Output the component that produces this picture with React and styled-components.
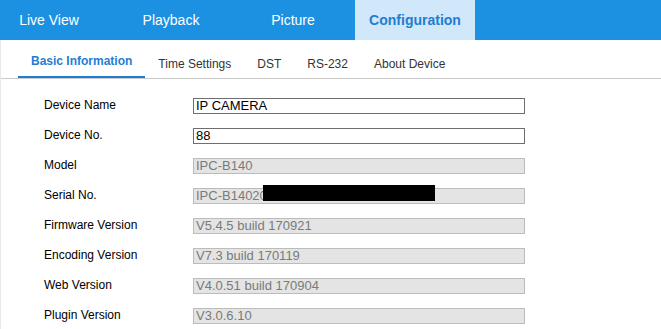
import React from "react";
import styled, { createGlobalStyle } from "styled-components";

const GlobalStyle = createGlobalStyle`
  html, body {
    margin: 0;
    padding: 0;
    background: #fff;
    font-family: "Liberation Sans", Arial, sans-serif;
  }
`;

const mainTabs = ["Live View", "Playback", "Picture", "Configuration"];
const subTabs = ["Basic Information", "Time Settings", "DST", "RS-232", "About Device"];

const fields = [
  { label: "Device Name", value: "IP CAMERA", editable: true },
  { label: "Device No.", value: "88", editable: true },
  { label: "Model", value: "IPC-B140" },
  { label: "Serial No.", value: "IPC-B140200", redacted: true },
  { label: "Firmware Version", value: "V5.4.5 build 170921" },
  { label: "Encoding Version", value: "V7.3 build 170119" },
  { label: "Web Version", value: "V4.0.51 build 170904" },
  { label: "Plugin Version", value: "V3.0.6.10" },
];

export default function App() {
  return (
    <Page>
      <GlobalStyle />
      <TopBar>
        <TabList>
          {mainTabs.map((t) => (
            <MainTab key={t} $active={t === "Configuration"}>{t}</MainTab>
          ))}
        </TabList>
      </TopBar>

      <Content>
        <SubNav>
          {subTabs.map((t, i) => (
            <SubTab key={t} $active={i === 0}>{t}</SubTab>
          ))}
        </SubNav>

        <Form>
          {fields.map((f) => (
            <Row key={f.label}>
              <Label>{f.label}</Label>
              <Field>
                <Input readOnly value={f.value} $editable={f.editable} />
                {f.redacted && <Redaction />}
              </Field>
            </Row>
          ))}
        </Form>
      </Content>
    </Page>
  );
}

const Page = styled.div`
  width: 661px;
  height: 329px;
  overflow: hidden;
  background: #fff;
`;

const TopBar = styled.div`
  height: 40px;
  background-color: #1c91e2;
  overflow: hidden;
`;

const TabList = styled.div`
  display: flex;
  gap: 2px;
  height: 100%;
  margin-left: -11px;
`;

const MainTab = styled.div`
  width: 120px;
  height: 40px;
  display: flex;
  align-items: center;
  justify-content: center;
  font-size: 14px;
  font-weight: ${(p) => (p.$active ? "bold" : "normal")};
  color: ${(p) => (p.$active ? "#1f7dd3" : "#fff")};
  background-color: ${(p) => (p.$active ? "#d1e7fa" : "transparent")};
`;

const Content = styled.div`
  border-left: 1px solid #e9e9e9;
  height: 289px;
`;

const SubNav = styled.div`
  display: flex;
  align-items: flex-end;
  height: 38px;
  padding-left: 17px;
  border-bottom: 1px solid #c9c9c9;
`;

const SubTab = styled.div`
  padding: 0 13px ${(p) => (p.$active ? "8px" : "7px")};
  font-size: 12px;
  line-height: 14px;
  font-weight: ${(p) => (p.$active ? "bold" : "normal")};
  color: ${(p) => (p.$active ? "#1f7dd3" : "#333")};
  border-bottom: ${(p) => (p.$active ? "2px solid #1f7dd3" : "none")};
  margin-bottom: ${(p) => (p.$active ? "-1px" : "0")};
  ${(p) => p.$active && "transform: translateY(-1px);"}
`;

const Form = styled.div`
  display: flex;
  flex-direction: column;
  padding: 10px 0 0 43px;
`;

const Row = styled.div`
  display: flex;
  align-items: center;
  height: 30px;
`;

const Label = styled.div`
  width: 149px;
  padding-top: 2px;
  font-size: 12px;
  color: #000;
`;

const Field = styled.div`
  position: relative;
  width: 332px;
  height: 16px;
`;

const Input = styled.input`
  box-sizing: border-box;
  width: 100%;
  height: 100%;
  margin: 0;
  padding: 0 2px;
  font-family: "Liberation Sans", Arial, sans-serif;
  font-size: 13px;
  line-height: 14px;
  outline: none;
  border: 1px solid ${(p) => (p.$editable ? "#6e6e6e" : "#bcbcbc")};
  background-color: ${(p) => (p.$editable ? "#fff" : "#e4e4e4")};
  color: ${(p) => (p.$editable ? "#000" : "#7a7a7a")};
`;

const Redaction = styled.span`
  position: absolute;
  left: 70px;
  top: -1px;
  width: 172px;
  height: 16px;
  background: #000;
`;
